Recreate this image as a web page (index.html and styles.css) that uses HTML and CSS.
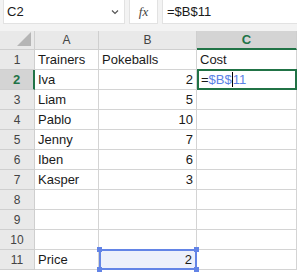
FILE: index.html
```html
<!DOCTYPE html>
<html lang="en">
<head>
    <meta charset="UTF-8" />
    <title>Sheet</title>
    <link rel="stylesheet" href="styles.css">
</head>
<body>
<div class="toolbar">
    <div class="namebox">
        <span>C2</span>
        <svg class="caret" width="8" height="6" viewBox="0 0 8 6"><path d="M1 1.5 L4 4.5 L7 1.5" fill="none" stroke="#555" stroke-width="1.2"/></svg>
    </div>
    <div class="fx">fx</div>
    <div class="formula">=$B$11</div>
</div>
<div class="spacer"></div>

<div class="sheet">
    <div class="hd corner"><span class="tri"></span></div>
    <div class="hd col">A</div>
    <div class="hd col">B</div>
    <div class="hd col active-col">C</div>

    <div class="hd row">1</div>
    <div class="cell">Trainers</div>
    <div class="cell">Pokeballs</div>
    <div class="cell">Cost</div>

    <div class="hd row active-row">2</div>
    <div class="cell">Iva</div>
    <div class="cell num">2</div>
    <div class="cell editing">=<span class="ref">$B$</span><span class="cursor"></span><span class="ref">11</span></div>

    <div class="hd row">3</div>
    <div class="cell">Liam</div>
    <div class="cell num">5</div>
    <div class="cell"></div>

    <div class="hd row">4</div>
    <div class="cell">Pablo</div>
    <div class="cell num">10</div>
    <div class="cell"></div>

    <div class="hd row">5</div>
    <div class="cell">Jenny</div>
    <div class="cell num">7</div>
    <div class="cell"></div>

    <div class="hd row">6</div>
    <div class="cell">Iben</div>
    <div class="cell num">6</div>
    <div class="cell"></div>

    <div class="hd row">7</div>
    <div class="cell">Kasper</div>
    <div class="cell num">3</div>
    <div class="cell"></div>

    <div class="hd row">8</div>
    <div class="cell"></div>
    <div class="cell"></div>
    <div class="cell"></div>

    <div class="hd row">9</div>
    <div class="cell"></div>
    <div class="cell"></div>
    <div class="cell"></div>

    <div class="hd row">10</div>
    <div class="cell"></div>
    <div class="cell"></div>
    <div class="cell"></div>

    <div class="hd row">11</div>
    <div class="cell">Price</div>
    <div class="cell num ref-range">2
        <span class="knob tl"></span><span class="knob bl"></span>
        <span class="knob tr"></span><span class="knob br"></span>
    </div>
    <div class="cell"></div>
</div>
</body>
</html>
```

FILE: styles.css
```css
body {
    margin: 0;
    width: 297px;
    height: 272px;
    overflow: hidden;
    background: #fff;
    font-family: "Liberation Sans", Arial, sans-serif;
    color: #1a1a1a;
}

.toolbar {
    display: flex;
    gap: 4px;
    height: 24px;
    padding: 0 0 0 3px;
    background: #f3f3f3;
    box-sizing: border-box;
}
.toolbar > div {
    background: #fff;
    border: 1px solid #e2e2e2;
    border-top: none;
    box-sizing: border-box;
    height: 24px;
    display: flex;
    align-items: center;
    font-size: 13px;
}
.namebox {
    width: 122px;
    padding: 0 5px 0 3px;
    justify-content: space-between;
}
.fx {
    width: 29px;
    justify-content: center;
    font-family: "Liberation Serif", serif;
    font-style: italic;
    color: #444;
}
.formula {
    flex: 1;
    padding-left: 4px;
    border-right: none !important;
}
.spacer {
    height: 7px;
    background: #f3f3f3;
}

.sheet {
    display: grid;
    grid-template-columns: 35px 64px 98px 100px;
    grid-template-rows: 19px repeat(11, 20px);
}
.hd {
    background: #e9e9e9;
    border-right: 1px solid #cfcfcf;
    border-bottom: 1px solid #cfcfcf;
    box-sizing: border-box;
    display: flex;
    align-items: center;
    justify-content: center;
    font-size: 12px;
    color: #444;
}
.corner {
    position: relative;
}
.corner .tri {
    position: absolute;
    right: 3px;
    bottom: 3px;
    width: 0;
    height: 0;
    border-left: 14px solid transparent;
    border-bottom: 14px solid #b5b5b5;
}
.active-col {
    background: #d4d4d4;
    color: #217346;
    font-weight: bold;
    font-size: 13px;
    border-bottom: 2px solid #217346;
}
.active-row {
    background: #d4d4d4;
    color: #217346;
    font-weight: bold;
    font-size: 13px;
    border-right: 2px solid #217346;
}

.cell {
    border-right: 1px solid #d4d4d4;
    border-bottom: 1px solid #d4d4d4;
    box-sizing: border-box;
    font-size: 13px;
    padding: 0 3px;
    display: flex;
    align-items: center;
    white-space: nowrap;
    overflow: visible;
}
.num {
    justify-content: flex-end;
}
.editing {
    border: 2px solid #217346;
    margin-top: -1px;
    height: 21px;
    padding-left: 2px;
}
.ref {
    color: #5b82e6;
}
.cursor {
    display: inline-block;
    width: 1px;
    height: 15px;
    background: #000;
}
.ref-range {
    position: relative;
    background: #edf0fb;
    border: 2px solid #6384e6;
    margin-top: -1px;
    height: 21px;
}
.knob {
    position: absolute;
    width: 5px;
    height: 5px;
    background: #6384e6;
}
.knob.tl { left: -4px; top: -4px; }
.knob.bl { left: -4px; bottom: -4px; }
.knob.tr { right: -4px; top: -4px; }
.knob.br { right: -4px; bottom: -4px; }
```
